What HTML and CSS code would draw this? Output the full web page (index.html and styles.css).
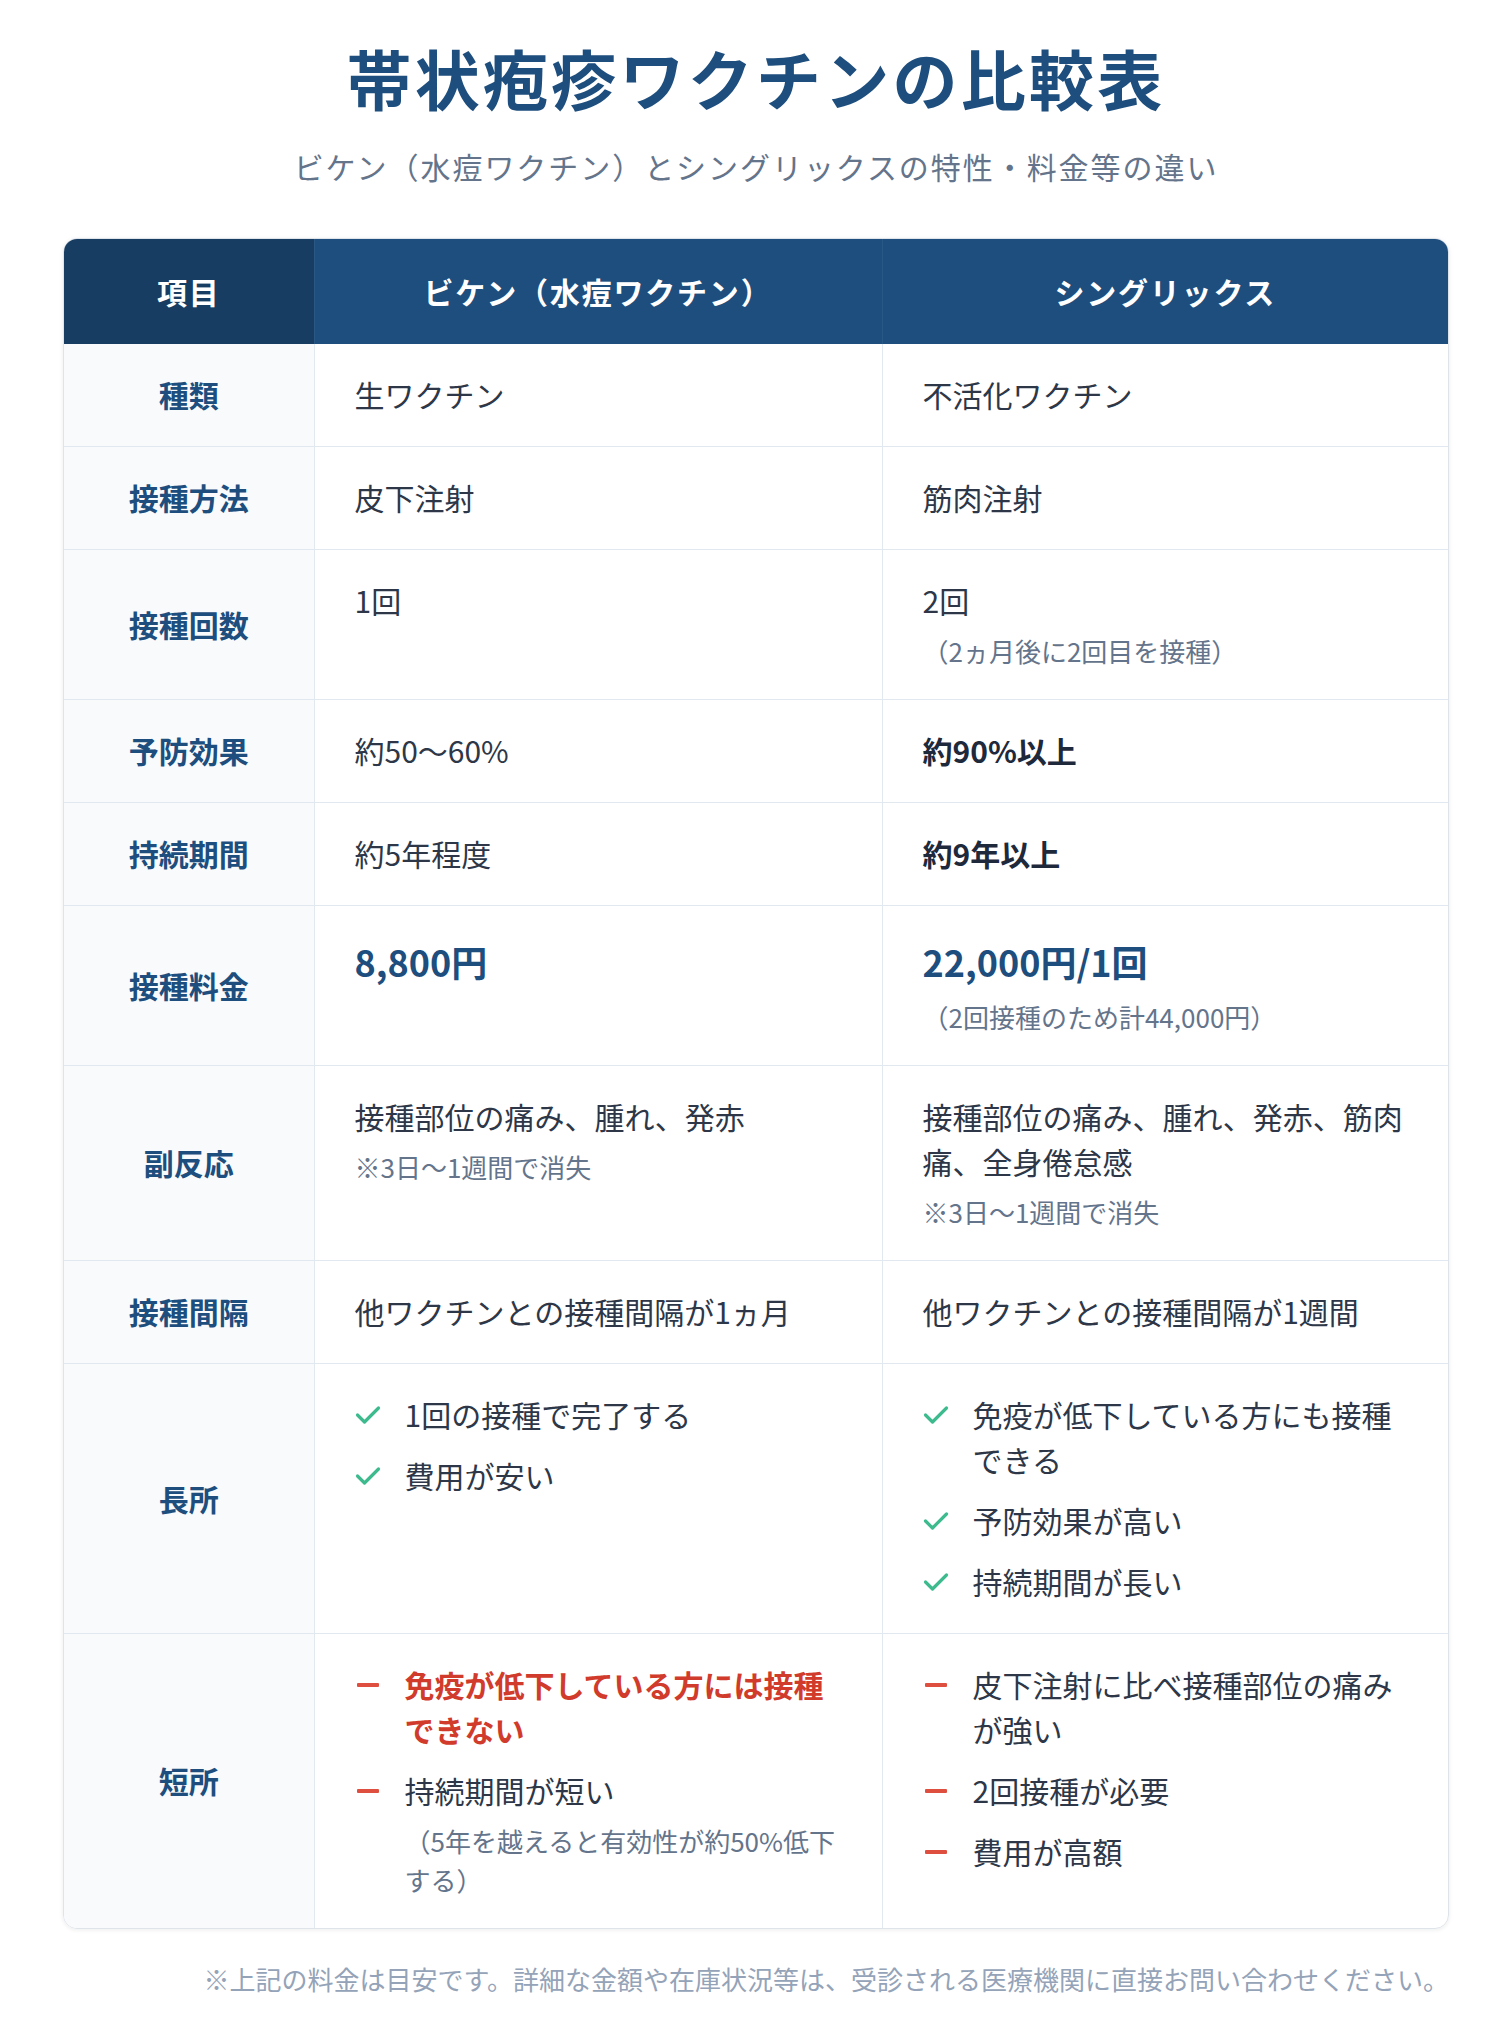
FILE: index.html
```html
<!DOCTYPE html>
<html lang="ja">
<head>
<meta charset="utf-8">
<title>帯状疱疹ワクチンの比較表</title>
<link rel="stylesheet" href="styles.css">
</head>
<body>
<div class="page">
  <h1 class="title">帯状疱疹ワクチンの比較表</h1>
  <p class="subtitle">ビケン（水痘ワクチン）とシングリックスの特性・料金等の違い</p>

  <div class="table-wrap">
    <table class="compare">
      <colgroup>
        <col class="col-label">
        <col class="col-a">
        <col>
      </colgroup>
      <thead>
        <tr>
          <th class="th-label">項目</th>
          <th>ビケン（水痘ワクチン）</th>
          <th>シングリックス</th>
        </tr>
      </thead>
      <tbody>
        <tr>
          <td class="label">種類</td>
          <td class="val">生ワクチン</td>
          <td class="val">不活化ワクチン</td>
        </tr>
        <tr>
          <td class="label">接種方法</td>
          <td class="val">皮下注射</td>
          <td class="val">筋肉注射</td>
        </tr>
        <tr>
          <td class="label">接種回数</td>
          <td class="val">1回</td>
          <td class="val">2回<div class="note">（2ヵ月後に2回目を接種）</div></td>
        </tr>
        <tr>
          <td class="label">予防効果</td>
          <td class="val">約50〜60%</td>
          <td class="val"><strong class="em">約90%以上</strong></td>
        </tr>
        <tr>
          <td class="label">持続期間</td>
          <td class="val">約5年程度</td>
          <td class="val"><strong class="em">約9年以上</strong></td>
        </tr>
        <tr>
          <td class="label">接種料金</td>
          <td class="val"><div class="price">8,800円</div></td>
          <td class="val"><div class="price">22,000円/1回</div><div class="note">（2回接種のため計44,000円）</div></td>
        </tr>
        <tr>
          <td class="label">副反応</td>
          <td class="val">接種部位の痛み、腫れ、発赤<div class="note">※3日〜1週間で消失</div></td>
          <td class="val">接種部位の痛み、腫れ、発赤、筋肉痛、全身倦怠感<div class="note">※3日〜1週間で消失</div></td>
        </tr>
        <tr>
          <td class="label">接種間隔</td>
          <td class="val">他ワクチンとの接種間隔が1ヵ月</td>
          <td class="val">他ワクチンとの接種間隔が1週間</td>
        </tr>
        <tr>
          <td class="label">長所</td>
          <td class="val">
            <ul class="points">
              <li><span class="icon"><svg class="check" viewBox="0 0 26 20" width="26" height="20"><polyline points="2.5,10 9.5,17 23.5,3" /></svg></span><span class="txt">1回の接種で完了する</span></li>
              <li><span class="icon"><svg class="check" viewBox="0 0 26 20" width="26" height="20"><polyline points="2.5,10 9.5,17 23.5,3" /></svg></span><span class="txt">費用が安い</span></li>
            </ul>
          </td>
          <td class="val">
            <ul class="points">
              <li><span class="icon"><svg class="check" viewBox="0 0 26 20" width="26" height="20"><polyline points="2.5,10 9.5,17 23.5,3" /></svg></span><span class="txt">免疫が低下している方にも接種できる</span></li>
              <li><span class="icon"><svg class="check" viewBox="0 0 26 20" width="26" height="20"><polyline points="2.5,10 9.5,17 23.5,3" /></svg></span><span class="txt">予防効果が高い</span></li>
              <li><span class="icon"><svg class="check" viewBox="0 0 26 20" width="26" height="20"><polyline points="2.5,10 9.5,17 23.5,3" /></svg></span><span class="txt">持続期間が長い</span></li>
            </ul>
          </td>
        </tr>
        <tr class="last">
          <td class="label">短所</td>
          <td class="val">
            <ul class="points">
              <li><span class="icon"><span class="dash"></span></span><span class="txt warn">免疫が低下している方には接種できない</span></li>
              <li><span class="icon"><span class="dash"></span></span><span class="txt">持続期間が短い<div class="note">（5年を越えると有効性が約50%低下する）</div></span></li>
            </ul>
          </td>
          <td class="val">
            <ul class="points">
              <li><span class="icon"><span class="dash"></span></span><span class="txt">皮下注射に比べ接種部位の痛みが強い</span></li>
              <li><span class="icon"><span class="dash"></span></span><span class="txt">2回接種が必要</span></li>
              <li><span class="icon"><span class="dash"></span></span><span class="txt">費用が高額</span></li>
            </ul>
          </td>
        </tr>
      </tbody>
    </table>
  </div>

  <p class="footnote">※上記の料金は目安です。詳細な金額や在庫状況等は、受診される医療機関に直接お問い合わせください。</p>
</div>
</body>
</html>
```

FILE: styles.css
```css
* {
  box-sizing: border-box;
}

html, body {
  margin: 0;
  padding: 0;
  background: #ffffff;
}

body {
  font-family: "Noto Sans CJK JP", "Noto Sans", sans-serif;
  color: #2d3748;
}

.page {
  padding: 35px 63px 0;
}

.title {
  margin: 0;
  text-align: center;
  font-size: 65px;
  line-height: 1.3;
  font-weight: 700;
  letter-spacing: 0.05em;
  color: #1d4e7e;
}

.subtitle {
  margin: 24px 0 0;
  text-align: center;
  font-size: 30px;
  line-height: 1.5;
  letter-spacing: 0.065em;
  color: #64748b;
}

.table-wrap {
  margin-top: 49px;
  border: 1px solid #dfe4ea;
  border-radius: 14px;
  overflow: hidden;
  box-shadow: 0 1px 4px rgba(15, 23, 42, 0.08);
}

.compare {
  width: 100%;
  border-collapse: collapse;
  table-layout: fixed;
}

.col-label {
  width: 250px;
}

.col-a {
  width: 568px;
}

.compare th {
  padding: 30px 20px;
  font-size: 30px;
  line-height: 1.5;
  font-weight: 700;
  letter-spacing: 0.06em;
  color: #ffffff;
  background: #1d4e7e;
  text-align: center;
  border-left: 1px solid rgba(255, 255, 255, 0.06);
}

.compare th.th-label {
  background: #173d63;
  border-left: none;
}

.compare td {
  border-bottom: 1px solid #e2e8f0;
  border-left: 1px solid #e2e8f0;
}

.compare tr.last td {
  border-bottom: none;
}

.compare td.label {
  border-left: none;
  background: #f8fafc;
  text-align: center;
  vertical-align: middle;
  font-size: 30px;
  line-height: 1.5;
  font-weight: 700;
  color: #1d4e7e;
  padding: 28px 16px;
}

.compare td.val {
  vertical-align: top;
  padding: 28.5px 40px;
  font-size: 30px;
  line-height: 1.5;
  color: #2d3748;
}

.em {
  font-weight: 700;
  color: #1e293b;
}

.price {
  font-size: 36px;
  line-height: 1.53;
  font-weight: 700;
  color: #1d4e7e;
}

.note {
  margin-top: 8px;
  font-size: 26px;
  line-height: 1.5;
  color: #64748b;
}

.points {
  list-style: none;
  margin: 0;
  padding: 0;
  display: flex;
  flex-direction: column;
  gap: 16px;
}

.points li {
  display: flex;
  align-items: flex-start;
  gap: 24px;
}

.icon {
  flex: 0 0 26px;
  height: 45px;
  display: flex;
  align-items: center;
  justify-content: center;
}

.check {
  display: block;
  fill: none;
  stroke: #3dbb8e;
  stroke-width: 3.2;
  stroke-linecap: round;
  stroke-linejoin: round;
}

.dash {
  display: block;
  width: 22px;
  height: 4px;
  border-radius: 1px;
  background: #df4f40;
}

.txt {
  flex: 1 1 auto;
  min-width: 0;
}

.txt.warn {
  color: #d13b2b;
  font-weight: 700;
}

.footnote {
  margin: 30px 0 0;
  text-align: right;
  font-size: 26px;
  line-height: 1.5;
  color: #94a3b8;
}
```
